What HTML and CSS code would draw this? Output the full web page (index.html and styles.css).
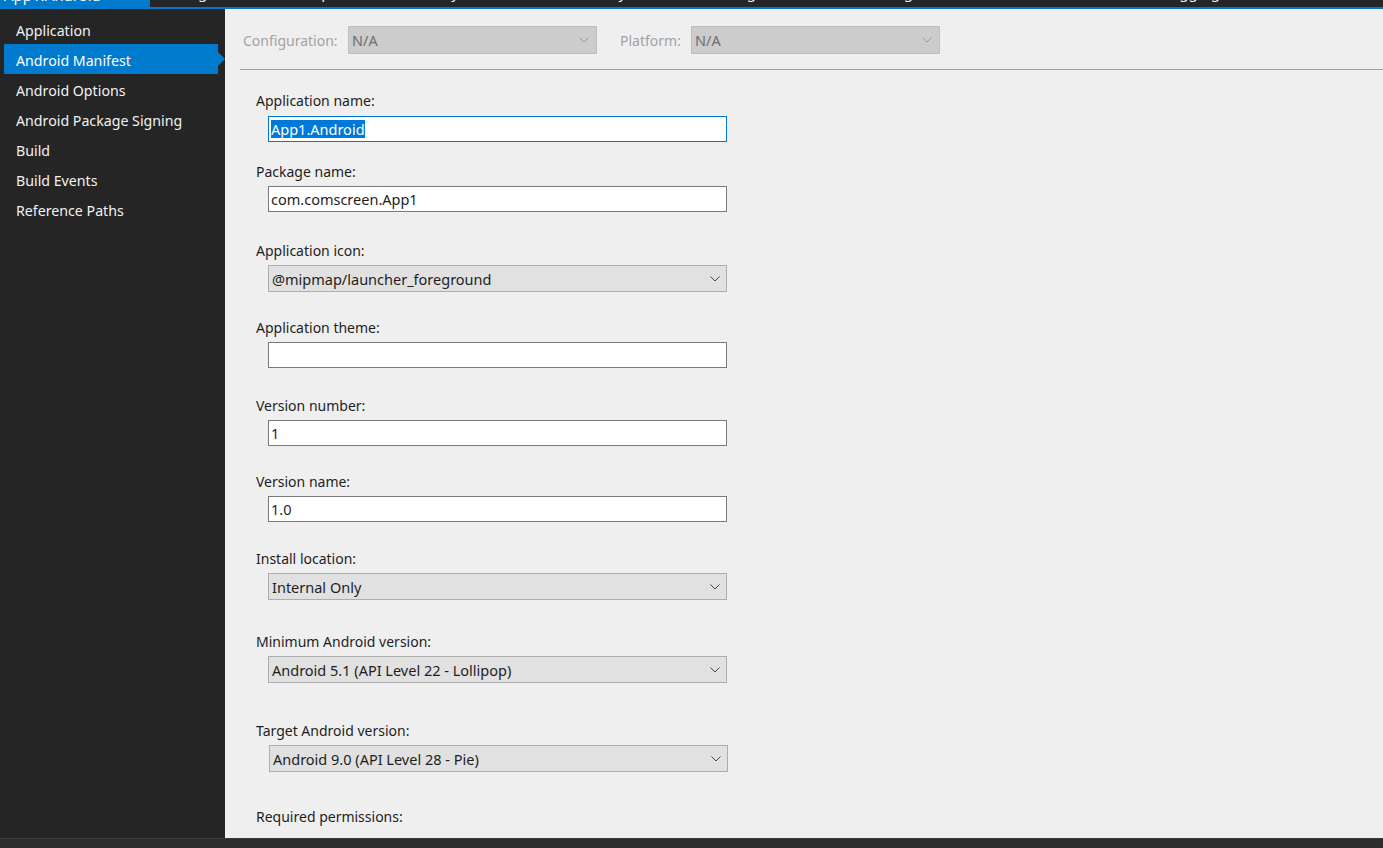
FILE: index.html
```html
<!DOCTYPE html>
<html>
<head>
<meta charset="utf-8">
<link rel="stylesheet" href="styles.css">
</head>
<body>
<div class="app">
  <div class="topbar">
    <div class="doc-tab active"><span>App1.Android</span></div>
    <div class="doc-strip">
      <span class="t1">Debug</span>
      <span class="t2">Properties</span>
      <span class="t3">Play</span>
      <span class="t4">Assembly</span>
      <span class="t5">Settings</span>
      <span class="t6">Design</span>
      <span class="t7">Logging</span>
    </div>
  </div>
  <div class="middle">
    <nav class="sidebar">
      <div class="nav-item">Application</div>
      <div class="nav-item selected">Android Manifest</div>
      <div class="nav-item">Android Options</div>
      <div class="nav-item">Android Package Signing</div>
      <div class="nav-item">Build</div>
      <div class="nav-item">Build Events</div>
      <div class="nav-item">Reference Paths</div>
    </nav>
    <main class="content">
      <div class="config-bar">
        <span class="cfg-label">Configuration:</span>
        <div class="cfg-select"><span>N/A</span><svg class="chev" width="10" height="6" viewBox="0 0 10 6"><polyline points="0.5,0.5 5,5 9.5,0.5" fill="none" stroke="#9a9a9a" stroke-width="1"/></svg></div>
        <span class="cfg-label platform">Platform:</span>
        <div class="cfg-select"><span>N/A</span><svg class="chev" width="10" height="6" viewBox="0 0 10 6"><polyline points="0.5,0.5 5,5 9.5,0.5" fill="none" stroke="#9a9a9a" stroke-width="1"/></svg></div>
      </div>
      <div class="divider"></div>
      <div class="form">
        <div class="field f1">
          <div class="label">Application name:</div>
          <div class="textbox focused"><span class="sel">App1.Android</span></div>
        </div>
        <div class="field f2">
          <div class="label">Package name:</div>
          <div class="textbox">com.comscreen.App1</div>
        </div>
        <div class="field f3">
          <div class="label">Application icon:</div>
          <div class="combo"><span>@mipmap/launcher_foreground</span><svg class="chev" width="10" height="6" viewBox="0 0 10 6"><polyline points="0.5,0.5 5,5 9.5,0.5" fill="none" stroke="#444" stroke-width="1"/></svg></div>
        </div>
        <div class="field f4">
          <div class="label">Application theme:</div>
          <div class="textbox"></div>
        </div>
        <div class="field f5">
          <div class="label">Version number:</div>
          <div class="textbox">1</div>
        </div>
        <div class="field f6">
          <div class="label">Version name:</div>
          <div class="textbox">1.0</div>
        </div>
        <div class="field f7">
          <div class="label">Install location:</div>
          <div class="combo"><span>Internal Only</span><svg class="chev" width="10" height="6" viewBox="0 0 10 6"><polyline points="0.5,0.5 5,5 9.5,0.5" fill="none" stroke="#444" stroke-width="1"/></svg></div>
        </div>
        <div class="field f8">
          <div class="label">Minimum Android version:</div>
          <div class="combo"><span>Android 5.1 (API Level 22 - Lollipop)</span><svg class="chev" width="10" height="6" viewBox="0 0 10 6"><polyline points="0.5,0.5 5,5 9.5,0.5" fill="none" stroke="#444" stroke-width="1"/></svg></div>
        </div>
        <div class="field f9">
          <div class="label">Target Android version:</div>
          <div class="combo shifted"><span>Android 9.0 (API Level 28 - Pie)</span><svg class="chev" width="10" height="6" viewBox="0 0 10 6"><polyline points="0.5,0.5 5,5 9.5,0.5" fill="none" stroke="#444" stroke-width="1"/></svg></div>
        </div>
        <div class="field f10">
          <div class="label">Required permissions:</div>
        </div>
      </div>
    </main>
  </div>
  <div class="statusbar"></div>
</div>
</body>
</html>
```
FILE: styles.css
```css
* { box-sizing: border-box; }
html, body { margin: 0; padding: 0; }
body {
  width: 1383px;
  height: 848px;
  overflow: hidden;
  font-family: "Noto Sans", "Open Sans", sans-serif;
  font-size: 14px;
  color: #1e1e1e;
  background: #efefef;
}
.app {
  display: flex;
  flex-direction: column;
  height: 848px;
}
.topbar {
  height: 9px;
  display: flex;
  background: #007acc;
  overflow: hidden;
  flex: none;
}
.doc-tab {
  width: 150px;
  height: 9px;
  background: #007acc;
  color: #ffffff;
  overflow: hidden;
  padding-left: 4px;
}
.doc-tab span {
  display: block;
  font-size: 15px;
  line-height: 15px;
  margin-top: -12px;
  white-space: nowrap;
}
.doc-strip {
  flex: 1;
  height: 7px;
  background: #262628;
  overflow: hidden;
  display: flex;
  color: #f1f1f1;
  font-size: 15px;
}
.doc-strip span {
  display: block;
  line-height: 15px;
  margin-top: -15px;
  height: 22px;
  white-space: nowrap;
}
.t1 { margin-left: 10px; }
.t2 { margin-left: 90px; }
.t3 { margin-left: 60px; }
.t4 { margin-left: 100px; }
.t5 { margin-left: 80px; }
.t6 { margin-left: 110px; }
.t7 { margin-left: 240px; }
.middle {
  flex: 1;
  display: flex;
  min-height: 0;
}
.sidebar {
  width: 225px;
  flex: none;
  background: #252526;
  padding-top: 5px;
}
.nav-item {
  position: relative;
  height: 30px;
  padding-top: 3px;
  line-height: 27px;
  margin-right: 7px;
  margin-left: 4px;
  padding-left: 12px;
  color: #f1f1f1;
  font-size: 14.2px;
  white-space: nowrap;
}
.nav-item.selected {
  background: #007acc;
  color: #ffffff;
}
.nav-item.selected::after {
  content: "";
  position: absolute;
  right: -7px;
  top: 8px;
  border-left: 7px solid #007acc;
  border-top: 7px solid transparent;
  border-bottom: 7px solid transparent;
}
.content {
  flex: 1;
  background: #efefef;
  overflow: hidden;
}
.config-bar {
  display: flex;
  align-items: center;
  padding: 17px 0 0 18px;
  height: 45px;
}
.cfg-label {
  color: #a3a3a3;
  font-size: 14px;
  width: 105px;
}
.cfg-label.platform {
  margin-left: 23px;
  width: 71px;
}
.cfg-select {
  width: 249px;
  height: 28px;
  background: #cccccc;
  border: 1px solid #bfbfbf;
  color: #6e6e6e;
  display: flex;
  align-items: center;
  justify-content: space-between;
  padding: 0 7px 0 3px;
  font-size: 14.5px;
}
.divider {
  margin: 15px 0 0 15px;
  height: 1px;
  background: #a0a0a0;
}
.form {
  padding-left: 31px;
  padding-top: 20px;
}
.label {
  height: 20px;
  padding-top: 2px;
  line-height: 18px;
  white-space: nowrap;
}
.textbox {
  margin-left: 12px;
  margin-top: 5px;
  width: 459px;
  height: 26px;
  background: #ffffff;
  border: 1px solid #7a7a7a;
  padding-left: 2px;
  line-height: 24px;
  font-size: 14.5px;
}
.textbox.focused {
  border-color: #0078d7;
  margin-top: 6px;
}
.sel {
  background: #0078d7;
  color: #ffffff;
  display: inline-block;
  line-height: 18px;
  margin-top: 3px;
  vertical-align: top;
}
.combo {
  margin-left: 12px;
  margin-top: 5px;
  width: 459px;
  height: 27px;
  background: #e1e1e1;
  border: 1px solid #adadad;
  display: flex;
  align-items: center;
  justify-content: space-between;
  padding: 0 6px 0 3px;
  font-size: 14.5px;
}
.combo.shifted { margin-left: 13px; }
.f2 { margin-top: 19px; }
.f3 { margin-top: 28px; }
.f4 { margin-top: 25px; }
.f5 { margin-top: 27px; }
.f6 { margin-top: 25px; }
.f7 { margin-top: 26px; }
.f8 { margin-top: 31px; }
.f9 { margin-top: 37px; }
.f10 { margin-top: 34px; }
.statusbar {
  height: 10px;
  flex: none;
  background: #2d2d30;
  border-top: 1px solid #3a3a3e;
}
```
